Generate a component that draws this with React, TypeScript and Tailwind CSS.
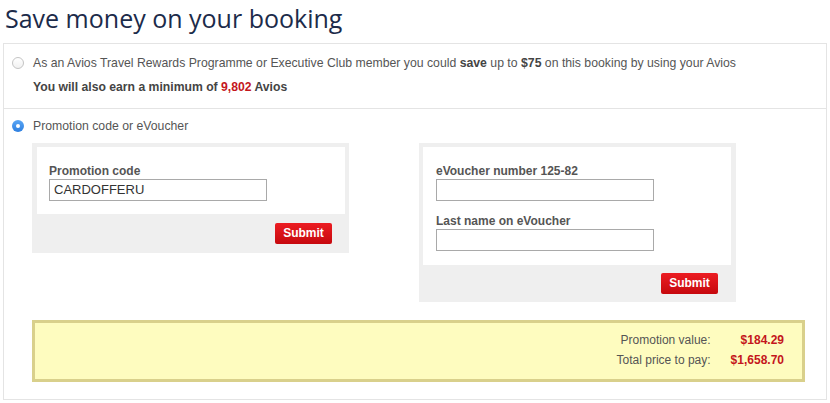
import React from "react";

function Radio({ checked }: { checked?: boolean }) {
  if (checked) {
    return (
      <span className="flex h-[12px] w-[12px] shrink-0 items-center justify-center rounded-full bg-gradient-to-b from-[#5aa6f5] to-[#2d7fe0]">
        <span className="h-[4px] w-[4px] rounded-full bg-white" />
      </span>
    );
  }
  return (
    <span className="h-[12px] w-[12px] shrink-0 rounded-full border border-[#c4c4c4] bg-gradient-to-b from-[#ffffff] to-[#f1f1f1]" />
  );
}

function SubmitButton() {
  return (
    <button className="h-[21px] w-[57px] rounded-[2px] bg-gradient-to-b from-[#ec1c22] to-[#c6080d] text-[12px] font-bold leading-[21px] text-white">
      Submit
    </button>
  );
}

function Field({ label, value }: { label: string; value?: string }) {
  return (
    <div className="flex flex-col">
      <div className="text-[12px] font-bold leading-[16px] text-[#555]">{label}</div>
      <div className="h-[22px] w-[218px] border border-[#a9a9a9] bg-white pl-[4px] text-[13px] leading-[20px] text-[#333]">
        {value}
      </div>
    </div>
  );
}

export default function App() {
  return (
    <div className="h-[403px] w-[830px] overflow-hidden bg-white px-[3px] font-['Liberation_Sans',Arial,sans-serif]">
      <h1 className="ml-[2px] mt-[2px] mb-[9px] font-['Open_Sans',sans-serif] text-[25px] leading-[32px] text-[#1c2b4a]">
        Save money on your booking
      </h1>
      <div className="w-[824px] border border-[#e4e4e4]">
        <div className="border-b border-[#e4e4e4] pl-[8px] pt-[11px] pb-[13px]">
          <div className="flex items-center gap-[9px]">
            <Radio />
            <div className="text-[12.25px] leading-[16px] text-[#555]">
              As an Avios Travel Rewards Programme or Executive Club member you could{" "}
              <b className="text-[#444]">save</b> up to <b className="text-[#444]">$75</b> on this booking by using your Avios
            </div>
          </div>
          <div className="ml-[21px] mt-[8px] text-[12.2px] font-bold leading-[16px] text-[#444]">
            You will also earn a minimum of <span className="text-[#c4161c]">9,802</span> Avios
          </div>
        </div>
        <div className="pl-[8px] pt-[9px] pb-[17px]">
          <div className="flex items-center gap-[9px]">
            <Radio checked />
            <div className="text-[12.25px] leading-[16px] text-[#555]">Promotion code or eVoucher</div>
          </div>
          <div className="ml-[20px] mt-[9px] flex items-start gap-[70px]">
            <div className="flex w-[317px] flex-col bg-[#efefef] pl-[5px] pr-[4px] pt-[4px] pb-[9px]">
              <div className="bg-white pl-[12px] pt-[16px] pb-[13px]">
                <Field label="Promotion code" value="CARDOFFERU" />
              </div>
              <div className="mt-[9px] flex justify-end pr-[13px]">
                <SubmitButton />
              </div>
            </div>
            <div className="flex w-[317px] flex-col bg-[#efefef] pl-[4px] pr-[5px] pt-[4px] pb-[8px]">
              <div className="flex flex-col gap-[12px] bg-white pl-[13px] pt-[16px] pb-[14px]">
                <Field label="eVoucher number 125-82" />
                <Field label="Last name on eVoucher" />
              </div>
              <div className="mt-[8px] flex justify-end pr-[13px]">
                <SubmitButton />
              </div>
            </div>
          </div>
          <div className="ml-[20px] mt-[18px] w-[773px] border-[3px] border-[#d9d08b] bg-[#fefcbf] pt-[7px] pb-[9px] pr-[18px]">
            <div className="flex justify-end gap-[20px] text-[12px] leading-[20px]">
              <div className="flex flex-col items-end text-[#555]">
                <div>Promotion value:</div>
                <div>Total price to pay:</div>
              </div>
              <div className="flex flex-col items-end font-bold text-[#c4161c]">
                <div>$184.29</div>
                <div>$1,658.70</div>
              </div>
            </div>
          </div>
        </div>
      </div>
    </div>
  );
}
